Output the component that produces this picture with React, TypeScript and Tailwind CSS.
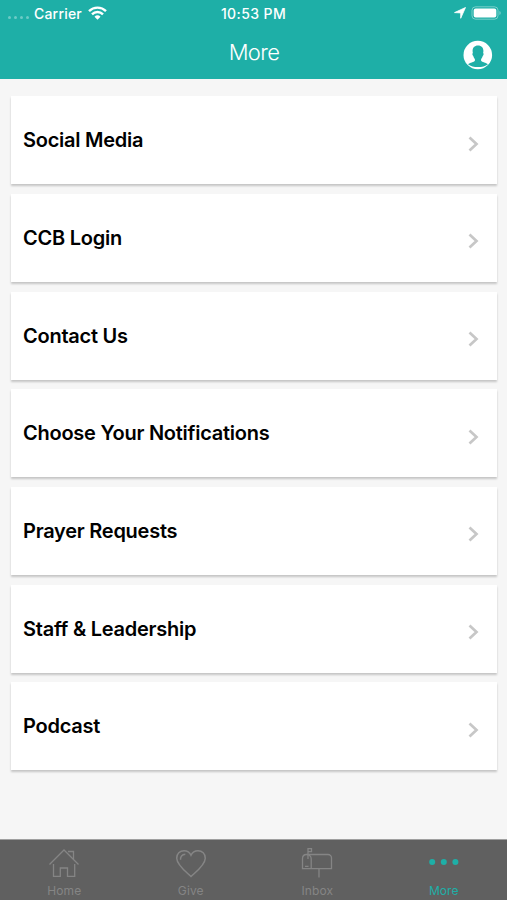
import React from 'react';

const menuItems = [
  'Social Media',
  'CCB Login',
  'Contact Us',
  'Choose Your Notifications',
  'Prayer Requests',
  'Staff & Leadership',
  'Podcast',
];

function WifiIcon() {
  return (
    <svg className="ml-[6px] h-[14px] w-[19px]" viewBox="0 0 19 14" fill="none" stroke="white" strokeWidth="2.4">
      <path d="M1 5.1a12.2 12.2 0 0 1 17 0" />
      <path d="M4 8.3a7.8 7.8 0 0 1 11 0" />
      <path d="M9.5 13.7 6.5 10.7a4.3 4.3 0 0 1 6 0Z" fill="white" stroke="none" />
    </svg>
  );
}

function ProfileIcon() {
  return (
    <svg className="h-[30px] w-[30px]" viewBox="0 0 30 30">
      <circle cx="14.8" cy="15" r="14.3" fill="white" />
      <path
        d="M15 5.5C11.500 5.500 9.600 7.800 9.600 10.800C9.600 11.700 9.700 12.400 9.900 13C9 13.300 9.400 15.500 10.300 15.900C10.700 17.300 11.200 18.200 11.900 18.900V20.800C11 22.300 7 22.700 5 24.200C7.600 26.200 11 27 15 27C19 27 22.400 26.200 25 24.200C23 22.700 19 22.300 18.100 20.800V18.900C18.800 18.200 19.300 17.300 19.700 15.900C20.600 15.500 21 13.300 20.100 13C20.300 12.400 20.400 11.700 20.400 10.800C20.400 7.800 18.500 5.500 15 5.500Z"
        fill="#1eafa7"
      />
    </svg>
  );
}

function HomeIcon() {
  return (
    <svg className="h-8 w-8" viewBox="0 0 32 32" fill="none" stroke="currentColor" strokeWidth="1.3">
      <path d="M1.5 17.5 16 3 30.5 17.5" />
      <path d="M20 4.5h5.500v7.500" />
      <path d="M5.500 17v12.300h6.800v-8.300h7.200v8.300h7.200V17" />
    </svg>
  );
}

function HeartIcon() {
  return (
    <svg className="h-8 w-8" viewBox="0 0 32 32" fill="none" stroke="currentColor" strokeWidth="1.5">
      <path d="M16 29.500C12.500 26 2 18.500 1.700 11.200 1.500 6.700 5 3.700 9 3.700c3.500 0 5.800 2 7 4.600C17.200 5.700 19.500 3.700 23 3.700c4 0 7.500 3 7.300 7.500C30 18.500 19.500 26 16 29.500Z" />
      <path d="M5.500 12.700C5.200 9.700 7 7.400 10.300 7.200" />
    </svg>
  );
}

function InboxIcon() {
  return (
    <svg className="h-8 w-8" viewBox="0 0 32 32" fill="none" stroke="currentColor" strokeWidth="1.3">
      <path d="M5.5 7.5H27a3.500 3.500 0 0 1 3.500 3.500v10.700h-29V11.800c0-2.500 1.500-4.300 4-4.300s4.700 1.800 4.700 4.300v9.800" />
      <path d="M7 12V1.700h3.500v3H7" />
      <path d="M4 19.400h3.500M18 21.800v8.700" />
    </svg>
  );
}

function MoreIcon() {
  return (
    <svg className="h-8 w-8" viewBox="0 0 32 32" fill="currentColor">
      <circle cx="4.200" cy="15" r="3" />
      <circle cx="15.800" cy="15" r="3" />
      <circle cx="27.400" cy="15" r="3" />
    </svg>
  );
}

const tabs = [
  { label: 'Home', icon: <HomeIcon /> },
  { label: 'Give', icon: <HeartIcon /> },
  { label: 'Inbox', icon: <InboxIcon /> },
  { label: 'More', icon: <MoreIcon />, active: true },
];

function Header() {
  return (
    <header className="h-[79px] shrink-0 bg-[#1eafa7] text-white">
      {/* Status bar */}
      <div className="grid h-[26px] grid-cols-3 items-center text-[14px] font-medium">
        <div className="flex items-center pl-[8px]">
          <div className="mt-[8px] mr-[5px] flex gap-[3px]">
            {[0, 1, 2, 3].map((dot) => (
              <span key={dot} className="h-[3px] w-[3px] rounded-full bg-white/35" />
            ))}
          </div>
          <span className="tracking-[0.2px]">Carrier</span>
          <WifiIcon />
        </div>
        <span className="text-center tracking-[0.4px]">10:53 PM</span>
        <div className="flex items-center justify-end pr-[5px]">
          <svg className="mr-[5px] h-[12px] w-[12px]" viewBox="0 0 12 12" fill="white" stroke="white" strokeWidth=".8" strokeLinejoin="round">
            <path d="M11.5.5 6.7 11.3V5.9L.5 5.6Z" />
          </svg>
          <svg className="h-[14px] w-[31px]" viewBox="0 0 31 14" fill="none">
            <rect x="1" y=".8" width="26" height="12.4" rx="3.5" stroke="white" strokeOpacity=".4" />
            <rect x="2.7" y="2.4" width="22.6" height="9.2" rx="2" fill="white" />
            <path d="M28.5 5v4c1.5-.8 1.5-3.2 0-4Z" fill="white" fillOpacity=".5" />
          </svg>
        </div>
      </div>
      {/* Title */}
      <div className="grid h-[53px] grid-cols-3 items-center">
        <h1 className="col-start-2 pl-px text-center text-[22px] font-light tracking-[-0.6px]">More</h1>
        <div className="flex justify-end pt-[4px] pr-[14px]">
          <ProfileIcon />
        </div>
      </div>
    </header>
  );
}

function App() {
  return (
    <div className="flex h-[900px] w-[507px] flex-col overflow-hidden bg-[#f6f6f6] font-['Inter',sans-serif]">
      <Header />

      <main className="flex flex-1 flex-col gap-[9.7px] px-[10.5px] pt-[17.2px]">
        {menuItems.map((item) => (
          <a
            key={item}
            className="flex h-[88px] shrink-0 items-center justify-between bg-white pr-[18px] pl-[12.5px] shadow-[0_1.5px_2px_rgba(0,0,0,0.2)]"
          >
            <span className="text-[20px] font-semibold tracking-[-0.25px] text-black">{item}</span>
            <svg className="mt-[7px] h-[16px] w-[11px]" viewBox="0 0 11 16" fill="none" stroke="#c7c7c7" strokeWidth="2.7">
              <path d="M1.5 1.5 8.5 8 1.5 14.5" />
            </svg>
          </a>
        ))}
      </main>

      <nav className="grid h-[61px] shrink-0 grid-cols-4 border-t border-[#a0a0a0] bg-[#606060] pl-[1px]">
        {tabs.map((tab) => (
          <a
            key={tab.label}
            className={`flex flex-col items-center pt-[7px] ${tab.active ? 'text-[#1eafa7]' : 'text-[#858585]'}`}
          >
            {tab.icon}
            <span className="mt-[3px] text-[12px] leading-[18px] tracking-[0.1px]">{tab.label}</span>
          </a>
        ))}
      </nav>
    </div>
  );
}

export default App;
